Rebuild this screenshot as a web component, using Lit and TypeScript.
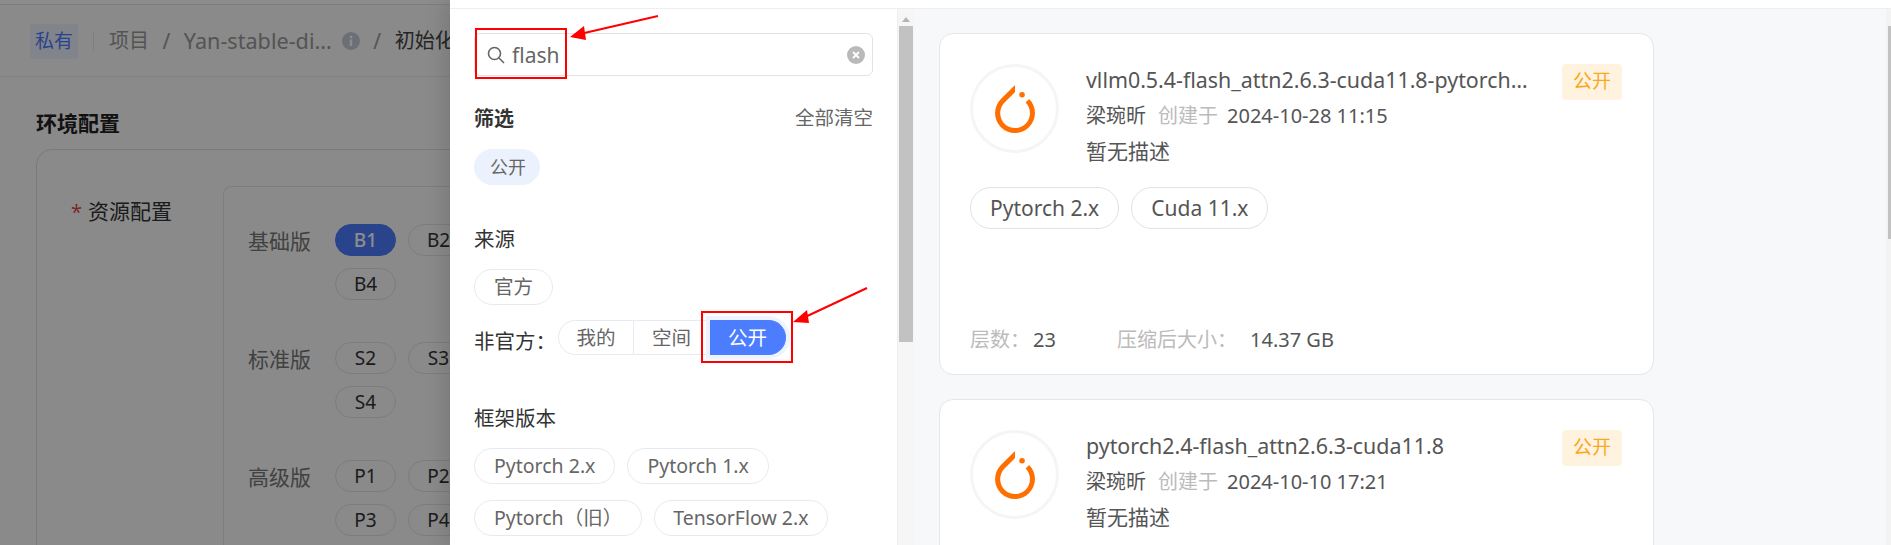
import { LitElement, html, css, svg, TemplateResult } from "lit";
import { customElement } from "lit/decorators.js";

interface ImageCard {
  title: string;
  created: string;
  tags: string[];
  layers: string;
  size: string;
}

const CARDS: ImageCard[] = [
  {
    title: "vllm0.5.4-flash_attn2.6.3-cuda11.8-pytorch2.4.0-python3.10",
    created: "2024-10-28 11:15",
    tags: ["Pytorch 2.x", "Cuda 11.x"],
    layers: "23",
    size: "14.37 GB",
  },
  {
    title: "pytorch2.4-flash_attn2.6.3-cuda11.8",
    created: "2024-10-10 17:21",
    tags: ["Pytorch 2.x", "Cuda 11.x"],
    layers: "21",
    size: "11.02 GB",
  },
];

const TORCH_PATH =
  "M12.005 0L4.952 7.053a9.865 9.865 0 000 14.022 9.866 9.866 0 0014.022 0c3.984-3.9 3.986-10.205.085-14.023l-1.744 1.743c2.904 2.905 2.904 7.634 0 10.538s-7.634 2.904-10.538 0-2.904-7.634 0-10.538l4.647-4.646.582-.665zm3.521 3.464a1.392 1.392 0 100 2.784 1.392 1.392 0 000-2.784z";

@customElement("app-root")
export class AppRoot extends LitElement {
  static styles = css`
    :host {
      display: block;
      position: relative;
      width: 1891px;
      height: 545px;
      overflow: hidden;
      background: #fff;
      font-family: "Noto Sans", "Noto Sans CJK SC", sans-serif;
      font-size: 20px;
      color: #333;
    }

    .page {
      display: flex;
      height: 545px;
    }

    /* page behind the drawer */
    .behind {
      position: relative;
      width: 450px;
      flex: none;
      overflow: hidden;
      background: #fbfbfb;
    }

    .mask {
      position: absolute;
      inset: 0;
      background: rgba(0, 0, 0, 0.45);
    }

    .behind-inner {
      width: 900px;
    }

    .top-strip {
      height: 4px;
      background: #fff;
      border-bottom: 1px solid #e4e6ea;
    }

    .crumbs {
      display: flex;
      align-items: center;
      height: 72px;
      padding: 1px 0 0 30px;
      box-sizing: border-box;
      border-bottom: 1px solid #e9e9e9;
      color: #999;
      white-space: nowrap;
      line-height: 28px;
    }

    .private-tag {
      width: 48px;
      height: 35px;
      line-height: 35px;
      margin-right: 15px;
      text-align: center;
      font-size: 19px;
      border-radius: 3px;
      background: #ebf1fd;
      color: #4d7dff;
    }

    .crumb-div {
      width: 1px;
      height: 19px;
      margin-right: 15px;
      background: #e6e6e6;
    }

    .crumb-sep {
      margin: 0 13.5px;
      font-size: 21px;
    }

    .crumb-latin {
      font-size: 21.6px;
    }

    .crumb-now {
      color: #444;
    }

    .info {
      margin-left: 10px;
      width: 18px;
      height: 18px;
      flex: none;
    }

    .section-title {
      margin: 32px 0 12px 36px;
      font-size: 21px;
      line-height: 28px;
      font-weight: 700;
      color: #222;
    }

    .config-card {
      display: flex;
      margin-left: 36px;
      height: 500px;
      padding: 36px 0 0 36px;
      box-sizing: border-box;
      border: 1px solid #dedede;
      border-radius: 16px;
    }

    .config-label {
      width: 150px;
      flex: none;
      margin-top: 11px;
      margin-left: -2px;
      padding-right: 2px;
      line-height: 28px;
      font-size: 21px;
      color: #333;
    }

    .star {
      color: #e5484d;
      margin-right: 6px;
      font-size: 20px;
    }

    .spec-box {
      flex: 1;
      padding: 37px 0 0 24px;
      border: 1px solid #e3e3e3;
      border-radius: 8px;
    }

    .spec-group {
      display: flex;
      margin-bottom: 42px;
    }

    .spec-name {
      width: 87px;
      flex: none;
      font-size: 21px;
      line-height: 34px;
      color: #777;
    }

    .spec-pills {
      display: grid;
      grid-template-columns: 61px 61px 61px;
      gap: 12px;
    }

    .spec-pill {
      height: 32px;
      line-height: 31px;
      box-sizing: border-box;
      text-align: center;
      font-size: 19px;
      border: 1px solid #e3e3e3;
      border-radius: 16px;
      color: #333;
    }

    .spec-pill.on {
      background: #4d7dff;
      border-color: #4d7dff;
      color: #fff;
      font-weight: 500;
    }

    /* drawer */
    .drawer {
      flex: 1;
      display: flex;
      flex-direction: column;
      min-width: 0;
      background: #fff;
      box-shadow: -6px 0 18px rgba(0, 0, 0, 0.12);
      position: relative;
    }

    .drawer-top {
      height: 8px;
      flex: none;
      border-bottom: 1px solid #eceef0;
    }

    .drawer-body {
      flex: 1;
      display: flex;
      min-height: 0;
    }

    .filters {
      width: 447px;
      flex: none;
      padding: 24px 24px 0;
      box-sizing: border-box;
      overflow: hidden;
    }

    .search {
      display: flex;
      align-items: center;
      height: 43px;
      padding: 0 7px 0 12px;
      box-sizing: border-box;
      border: 1px solid #e1e3e8;
      border-radius: 6px;
      color: #666;
      font-size: 21px;
    }

    .search svg {
      flex: none;
    }

    .search-text {
      flex: 1;
      margin-left: 7px;
    }

    .filter-head {
      display: flex;
      justify-content: space-between;
      align-items: center;
      margin-top: 29px;
      line-height: 28px;
    }

    .filter-head b {
      font-size: 20px;
      font-weight: 700;
    }

    .clear-all {
      color: #666;
      font-size: 19.5px;
      margin-top: -2px;
    }

    .chips {
      display: flex;
      flex-wrap: wrap;
      gap: 15px 12px;
    }

    .chip {
      height: 36px;
      line-height: 34px;
      padding: 0 19px;
      box-sizing: border-box;
      border: 1px solid #e8eaf2;
      border-radius: 18px;
      font-size: 19.5px;
      color: #666;
      white-space: nowrap;
    }

    .chip.picked {
      margin-top: 16px;
      padding: 0 15px;
      width: 66px;
      font-size: 18px;
      background: #ebf1fd;
      border-color: #ebf1fd;
    }

    .chip.wide-text {
      padding: 0 18px;
    }

    .group-title {
      line-height: 28px;
      font-size: 20.5px;
      color: #333;
    }

    .source-title {
      margin-top: 40px;
      margin-bottom: 16px;
    }

    .frame-title {
      margin-top: 49px;
      margin-bottom: 16px;
    }

    .unofficial {
      display: flex;
      align-items: center;
      margin-top: 15px;
    }

    .unofficial .group-title {
      width: 84px;
      padding-top: 6px;
    }

    .segments {
      display: flex;
      height: 35px;
      line-height: 33px;
      font-size: 19.5px;
      color: #666;
    }

    .segment {
      width: 76px;
      box-sizing: border-box;
      text-align: center;
      border: 1px solid #e8eaf2;
      border-left: none;
    }

    .segment:first-child {
      border-left: 1px solid #e8eaf2;
      border-radius: 18px 0 0 18px;
    }

    .segment.active {
      background: #4d7dff;
      border-color: #4d7dff;
      color: #fff;
      border-radius: 0 18px 18px 0;
      box-shadow: 0 0 0 4px #edf3ff;
    }

    .frame-chips {
      row-gap: 16px;
    }

    .filter-bar {
      width: 18px;
      flex: none;
      position: relative;
      box-sizing: border-box;
      background: #f6f6f6;
      border-left: 1px solid #f0f0f0;
      padding: 8px 2px 0 1px;
    }

    .bar-arrow {
      width: 0;
      margin: 0 auto 4px;
      border: 4px solid transparent;
      border-top: none;
      border-bottom: 5px solid #b5b5b5;
    }

    .bar-thumb {
      height: 316px;
      background: #c2c2c2;
    }

    /* image list */
    .list {
      flex: 1;
      min-width: 0;
      overflow: hidden;
      padding: 24px 0 0 24px;
      background: #f7f8fa;
    }

    .card {
      display: flex;
      flex-direction: column;
      width: 715px;
      height: 342px;
      margin-bottom: 24px;
      padding: 30px 30px 0 30px;
      box-sizing: border-box;
      border: 1px solid #e6e6e6;
      border-radius: 14px;
      background: #fff;
    }

    .card-head {
      display: flex;
      align-items: flex-start;
    }

    .logo {
      width: 89px;
      height: 89px;
      flex: none;
      display: flex;
      align-items: center;
      justify-content: center;
      margin-right: 27px;
      box-sizing: border-box;
      border: 3px solid #f5f5f5;
      border-radius: 50%;
    }

    .card-main {
      width: 445px;
      flex: none;
      margin-right: 31px;
      padding-top: 3px;
      color: #555;
    }

    .card-title {
      white-space: nowrap;
      overflow: hidden;
      text-overflow: ellipsis;
      line-height: 28px;
      font-size: 21.4px;
      margin-top: -1px;
    }

    .card-meta {
      display: flex;
      margin-top: 8px;
      line-height: 28px;
    }

    .muted {
      color: #bbb;
    }

    .card-meta .muted {
      margin: 0 9px 0 12px;
    }

    .card-desc {
      margin-top: 7px;
      line-height: 28px;
      font-size: 21px;
    }

    .public-badge {
      width: 60px;
      height: 36px;
      line-height: 35px;
      flex: none;
      text-align: center;
      border-radius: 4px;
      background: #fff3df;
      color: #f9a825;
      font-size: 19px;
    }

    .card-tags {
      display: flex;
      gap: 12px;
      margin-top: 22px;
    }

    .card-tag {
      height: 42px;
      line-height: 40px;
      padding: 0 19px;
      box-sizing: border-box;
      border: 1px solid #e2e2e2;
      border-radius: 21px;
      color: #555;
      font-size: 21px;
      white-space: nowrap;
    }

    .card-stats {
      display: flex;
      margin-top: auto;
      margin-bottom: 20px;
      line-height: 28px;
      color: #555;
    }

    .card-stats .muted {
      margin-right: 3px;
    }

    .stat {
      width: 147px;
    }

    .stat-size .muted {
      margin-right: 13px;
    }

    .page-bar {
      width: 5px;
      flex: none;
      background: #f3f3f3;
      padding-top: 17px;
      padding-left: 2px;
      box-sizing: border-box;
    }

    .page-bar div {
      height: 213px;
      background: #c2c2c2;
    }

    .marks {
      position: absolute;
      inset: 0;
      width: 1891px;
      height: 545px;
      pointer-events: none;
    }
  `;

  private renderBehind(): TemplateResult {
    const groups = [
      { name: "基础版", pills: ["B1", "B2", "B3", "B4"] },
      { name: "标准版", pills: ["S2", "S3", "S3", "S4"] },
      { name: "高级版", pills: ["P1", "P2", "P2", "P3", "P4"] },
    ];
    return html`
      <div class="behind">
        <div class="behind-inner">
          <div class="top-strip"></div>
          <div class="crumbs">
            <div class="private-tag">私有</div>
            <div class="crumb-div"></div>
            <span>项目</span>
            <span class="crumb-sep">/</span>
            <span class="crumb-latin">Yan-stable-di...</span>
            <svg class="info" viewBox="0 0 18 18">
              <circle cx="9" cy="9" r="9" fill="#c5cbd6"></circle>
              <circle cx="9" cy="5" r="1.4" fill="#fff"></circle>
              <rect x="7.8" y="7.4" width="2.4" height="6.6" fill="#fff"></rect>
            </svg>
            <span class="crumb-sep">/</span>
            <span class="crumb-now">初始化开发环境</span>
          </div>
          <div class="section-title">环境配置</div>
          <div class="config-card">
            <div class="config-label"><span class="star">*</span>资源配置</div>
            <div class="spec-box">
              ${groups.map(
                (g) => html`
                  <div class="spec-group">
                    <div class="spec-name">${g.name}</div>
                    <div class="spec-pills">
                      ${g.pills.map(
                        (p) =>
                          html`<div class="spec-pill ${p === "B1" ? "on" : ""}">${p}</div>`,
                      )}
                    </div>
                  </div>
                `,
              )}
            </div>
          </div>
        </div>
        <div class="mask"></div>
      </div>
    `;
  }

  private renderFilters(): TemplateResult {
    const frames = ["Pytorch 2.x", "Pytorch 1.x", "Pytorch（旧）", "TensorFlow 2.x"];
    return html`
      <div class="filters">
        <div class="search">
          <svg width="18" height="18" viewBox="0 0 18 18" fill="none" stroke="#666" stroke-width="1.6">
            <circle cx="7.5" cy="7.5" r="6"></circle>
            <path d="M12 12l5 5"></path>
          </svg>
          <span class="search-text">flash</span>
          <svg width="18" height="18" viewBox="0 0 18 18">
            <circle cx="9" cy="9" r="9" fill="#b9b9b9"></circle>
            <path d="M6 6l6 6M12 6l-6 6" stroke="#fff" stroke-width="1.8"></path>
          </svg>
        </div>
        <div class="filter-head">
          <b>筛选</b>
          <span class="clear-all">全部清空</span>
        </div>
        <div class="chips"><div class="chip picked">公开</div></div>
        <div class="group-title source-title">来源</div>
        <div class="chips"><div class="chip">官方</div></div>
        <div class="unofficial">
          <div class="group-title">非官方：</div>
          <div class="segments">
            <div class="segment">我的</div>
            <div class="segment">空间</div>
            <div class="segment active">公开</div>
          </div>
        </div>
        <div class="group-title frame-title">框架版本</div>
        <div class="chips frame-chips">
          ${frames.map(
            (f) => html`<div class="chip ${f.startsWith("Tensor") ? "wide-text" : ""}">${f}</div>`,
          )}
        </div>
      </div>
      <div class="filter-bar">
        <div class="bar-arrow"></div>
        <div class="bar-thumb"></div>
      </div>
    `;
  }

  private renderCard(card: ImageCard): TemplateResult {
    return html`
      <div class="card">
        <div class="card-head">
          <div class="logo">
            <svg width="40" height="48" viewBox="2 0 20 24">
              <path d=${TORCH_PATH} fill="#ff6f00"></path>
            </svg>
          </div>
          <div class="card-main">
            <div class="card-title">${card.title}</div>
            <div class="card-meta">
              <span>梁琬昕</span>
              <span class="muted">创建于</span>
              <span>${card.created}</span>
            </div>
            <div class="card-desc">暂无描述</div>
          </div>
          <div class="public-badge">公开</div>
        </div>
        <div class="card-tags">
          ${card.tags.map((t) => html`<div class="card-tag">${t}</div>`)}
        </div>
        <div class="card-stats">
          <div class="stat"><span class="muted">层数：</span><span>${card.layers}</span></div>
          <div class="stat-size"><span class="muted">压缩后大小：</span><span>${card.size}</span></div>
        </div>
      </div>
    `;
  }

  private renderMarks(): TemplateResult {
    return html`
      <svg class="marks" viewBox="0 0 1891 545">
        ${svg`
          <rect x="476" y="29" width="90" height="49" fill="none" stroke="#f00" stroke-width="2"></rect>
          <rect x="702" y="312" width="90" height="50" fill="none" stroke="#f00" stroke-width="2"></rect>
          <path d="M658 16L580 34" stroke="#f00" stroke-width="2"></path>
          <path d="M570 37L584 26L586 40Z" fill="#f00"></path>
          <path d="M867 288L803 318" stroke="#f00" stroke-width="2"></path>
          <path d="M793 322L807 310L809 323Z" fill="#f00"></path>
        `}
      </svg>
    `;
  }

  protected render(): TemplateResult {
    return html`
      <div class="page">
        ${this.renderBehind()}
        <div class="drawer">
          <div class="drawer-top"></div>
          <div class="drawer-body">
            ${this.renderFilters()}
            <div class="list">${CARDS.map((c) => this.renderCard(c))}</div>
            <div class="page-bar"><div></div></div>
          </div>
        </div>
      </div>
      ${this.renderMarks()}
    `;
  }
}

declare global {
  interface HTMLElementTagNameMap {
    "app-root": AppRoot;
  }
}
